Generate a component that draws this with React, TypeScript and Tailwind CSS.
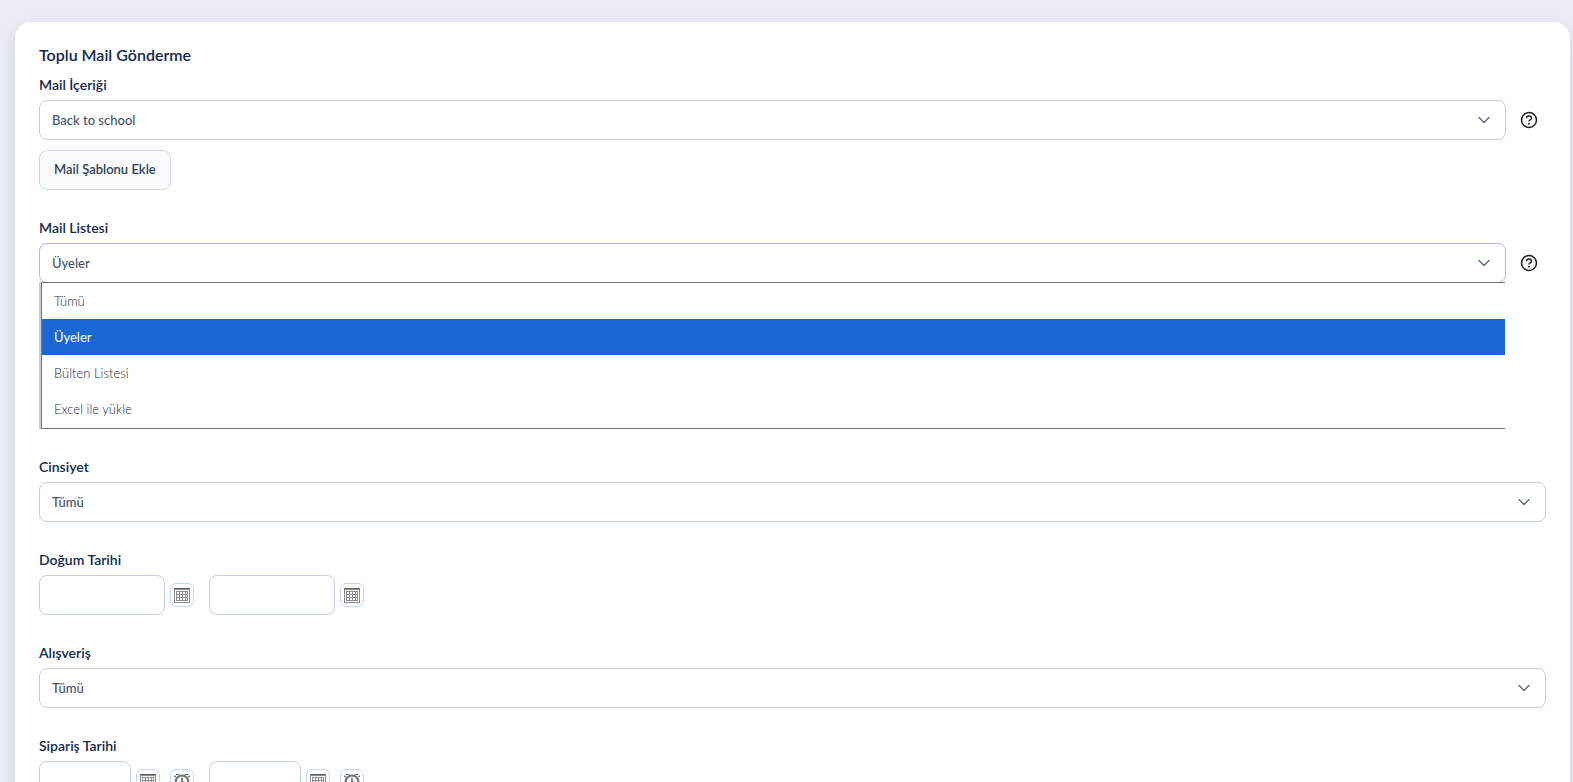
import { useState } from "react";
import type { ReactNode } from "react";

function Chevron() {
  return (
    <svg
      viewBox="0 0 16 16"
      className="pointer-events-none col-start-1 row-start-1 mr-3.5 h-4 w-4 self-center justify-self-end"
      fill="none"
      stroke="#5d6b85"
      strokeWidth="1.4"
      strokeLinecap="round"
      strokeLinejoin="round"
      aria-hidden="true"
    >
      <path d="M3 5.5 8 10.5 13 5.5" />
    </svg>
  );
}

type SelectProps = {
  id: string;
  options: string[];
  value: string;
  onChange: (value: string) => void;
  focused?: boolean;
};

function SelectBox({ id, options, value, onChange, focused = false }: SelectProps) {
  return (
    <div className="grid min-w-0 flex-1">
      <select
        id={id}
        value={value}
        onChange={(e) => onChange(e.target.value)}
        className={
          "col-start-1 row-start-1 h-10 w-full appearance-none rounded-lg border bg-white px-3 pt-0.5 text-[13px] font-medium text-[#475467] outline-none " +
          (focused ? "border-[#a4bcfd]" : "border-[#c5cedb]")
        }
      >
        {options.map((o) => (
          <option key={o}>{o}</option>
        ))}
      </select>
      <Chevron />
    </div>
  );
}

function HelpButton() {
  return (
    <button type="button" aria-label="Yardım" className="flex w-10 justify-center pl-1.5">
      <svg viewBox="0 0 20 20" className="h-5 w-5" fill="none" stroke="#1f1f1f" strokeWidth="1.5" aria-hidden="true">
        <circle cx="10" cy="10" r="7.5" />
        <path d="M7.5 8.3C7.5 7 8.6 6.1 10 6.1s2.5.9 2.5 2.2c0 1.6-2.5 1.7-2.5 3.3" />
        <circle cx="10" cy="13.8" r="0.95" fill="#1f1f1f" stroke="none" />
      </svg>
    </button>
  );
}

function Label({ htmlFor, children }: { htmlFor: string; children: ReactNode }) {
  return (
    <label htmlFor={htmlFor} className="mb-[5px] block text-sm leading-5 font-semibold text-[#12284c]">
      {children}
    </label>
  );
}

function CalendarIcon() {
  return (
    <svg viewBox="0 0 16 16" className="h-4 w-4" shapeRendering="crispEdges" aria-hidden="true">
      <rect x="0" y="1" width="16" height="15" fill="#8c8c8c" />
      <rect x="0" y="1" width="16" height="1" fill="#5c5c5c" />
      <rect x="1" y="3" width="14" height="12" fill="#ffffff" />
      <rect x="2" y="4" width="12" height="10" fill="#8c8c8c" />
      <path
        fill="#ffffff"
        d="M3 5h2v2H3zM6 5h2v2H6zM9 5h2v2H9zM12 5h1v2h-1zM3 8h2v2H3zM6 8h2v2H6zM9 8h2v2H9zM12 8h1v2h-1zM3 11h2v2H3zM6 11h2v2H6zM9 11h2v2H9zM12 11h1v2h-1z"
      />
    </svg>
  );
}

function ClockIcon() {
  return (
    <svg viewBox="0 0 16 16" className="h-4 w-4" fill="none" aria-hidden="true">
      <path d="M.8 4.2 1.4 2M2 1.5h3.4M15.2 4.2 14.6 2M14 1.5h-3.4" stroke="#2b2b2b" strokeWidth="1.2" strokeDasharray="1.6 0.8" />
      <circle cx="8" cy="8.8" r="6.3" stroke="#757575" strokeWidth="2.2" />
      <path d="M8 4.8V9.4h3" stroke="#555555" strokeWidth="1.5" />
      <path d="m3.5 13.5-1.5 2M12.5 13.5l1.5 2" stroke="#6b6b6b" strokeWidth="1.5" />
    </svg>
  );
}

function IconButton({ label, children }: { label: string; children: ReactNode }) {
  return (
    <button
      type="button"
      aria-label={label}
      className="flex h-6 w-6 items-center justify-center rounded-md border border-[#c7d7fe] bg-[#fcfdfd]"
    >
      {children}
    </button>
  );
}

function DateField({ id, label, withTime = false }: { id: string; label: string; withTime?: boolean }) {
  return (
    <div className="flex items-center">
      <input
        id={id}
        aria-label={label}
        type="text"
        className={
          "mr-[5px] h-10 rounded-lg border border-[#c5cedb] bg-white px-3 text-[13px] text-[#475467] outline-none " +
          (withTime ? "w-[92px]" : "w-[126px]")
        }
      />
      <div className="flex gap-2.5">
        <IconButton label="Tarih seç">
          <CalendarIcon />
        </IconButton>
        {withTime && (
          <IconButton label="Saat seç">
            <ClockIcon />
          </IconButton>
        )}
      </div>
    </div>
  );
}

const lists = ["Tümü", "Üyeler", "Bülten Listesi", "Excel ile yükle"];

export default function App() {
  const [content, setContent] = useState("Back to school");
  const [list, setList] = useState("Üyeler");
  const [gender, setGender] = useState("Tümü");
  const [shopping, setShopping] = useState("Tümü");

  return (
    <div className="h-screen overflow-hidden bg-[#eaedf6] pt-[22px] pr-[3px] pl-[15px] font-['Lato',sans-serif]">
      <form className="rounded-2xl bg-white px-6 pt-[21px] pb-10 shadow-[0_6px_16px_rgba(50,60,80,0.14)]">
        <h1 className="mb-2 text-base leading-6 font-semibold text-[#12284c]">Toplu Mail Gönderme</h1>

        <div className="flex flex-col gap-7">
          <div>
            <Label htmlFor="content">Mail İçeriği</Label>
            <div className="flex items-center">
              <SelectBox id="content" options={["Back to school"]} value={content} onChange={setContent} />
              <HelpButton />
            </div>
            <button
              type="button"
              className="mt-2.5 h-10 rounded-lg border border-[#c7d7fe] bg-[#fafcfc] px-3.5 text-[13px] font-semibold text-[#344054]"
            >
              Mail Şablonu Ekle
            </button>
          </div>

          <div className="mb-[146px]">
            <Label htmlFor="list">Mail Listesi</Label>
            <div className="relative flex items-center">
              <SelectBox id="list" options={lists} value={list} onChange={setList} focused />
              <HelpButton />
              <ul
                role="listbox"
                aria-label="Mail Listesi"
                className="absolute top-[39px] right-[41px] left-0.5 z-10 border-y border-l border-[#767676] bg-white pb-px shadow-[-2px_0_0_#cccccc]"
              >
                {lists.map((o) => (
                  <li
                    key={o}
                    role="option"
                    aria-selected={o === list}
                    onClick={() => setList(o)}
                    className={
                      "px-3 text-[13px] leading-9 " +
                      (o === list ? "bg-[#1967d2] text-white" : "font-light text-[#1d2939]")
                    }
                  >
                    {o}
                  </li>
                ))}
              </ul>
            </div>
          </div>

          <div>
            <Label htmlFor="gender">Cinsiyet</Label>
            <SelectBox id="gender" options={["Tümü", "Kadın", "Erkek"]} value={gender} onChange={setGender} />
          </div>

          <div>
            <Label htmlFor="birth-start">Doğum Tarihi</Label>
            <div className="flex gap-[15px]">
              <DateField id="birth-start" label="Doğum Tarihi başlangıç" />
              <DateField id="birth-end" label="Doğum Tarihi bitiş" />
            </div>
          </div>

          <div>
            <Label htmlFor="shopping">Alışveriş</Label>
            <SelectBox id="shopping" options={["Tümü"]} value={shopping} onChange={setShopping} />
          </div>

          <div>
            <Label htmlFor="order-start">Sipariş Tarihi</Label>
            <div className="flex gap-[15px]">
              <DateField id="order-start" label="Sipariş Tarihi başlangıç" withTime />
              <DateField id="order-end" label="Sipariş Tarihi bitiş" withTime />
            </div>
          </div>
        </div>
      </form>
    </div>
  );
}
